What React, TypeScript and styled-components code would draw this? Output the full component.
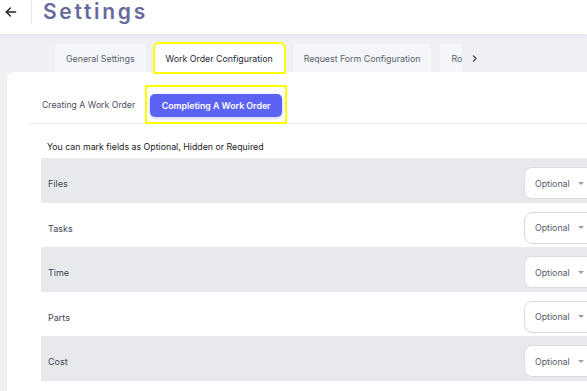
import React from "react";
import styled, { createGlobalStyle } from "styled-components";

const Global = createGlobalStyle`
  html, body { margin: 0; padding: 0; }
  body {
    background: #eef0f4;
    font-family: Inter, "Noto Sans", sans-serif;
    overflow: hidden;
  }
`;

const Page = styled.div`
  width: 587px;
  height: 391px;
  overflow: hidden;
  position: relative;
`;

const Header = styled.header`
  height: 34px;
  background: #ffffff;
  display: flex;
  align-items: flex-start;
  box-shadow: 0 2px 6px rgba(30, 40, 80, 0.06);
  position: relative;
  z-index: 1;
`;

const BackButton = styled.div`
  width: 32px;
  height: 24px;
  display: flex;
  align-items: center;
  justify-content: flex-start;
  padding-left: 3px;
  box-sizing: border-box;
  border-right: 1px solid #e6e7eb;
  color: #222;
`;

const Title = styled.h1`
  margin: 0 0 0 11px;
  font-size: 21px;
  line-height: 24px;
  font-weight: 600;
  color: #666a9c;
  letter-spacing: 2.7px;
`;

const TabsBar = styled.div`
  display: flex;
  align-items: flex-end;
  gap: 8px;
  padding-left: 55px;
  margin-top: 7px;
  height: 31px;
`;

const Tab = styled.div<{ $active?: boolean }>`
  height: 28px;
  box-sizing: border-box;
  padding: 0 11px;
  display: flex;
  align-items: center;
  font-size: 8.8px;
  white-space: nowrap;
  border-radius: 4px 4px 0 0;
  background: ${(p) => (p.$active ? "#ffffff" : "#f5f6f9")};
  color: ${(p) => (p.$active ? "#1f2937" : "#5a5f6e")};
  ${(p) => (p.$active ? "outline: 2px solid #ffff00; margin: 0 1px;" : "")}
`;

const ClippedTabs = styled.div`
  display: flex;
  width: 22px;
  overflow: hidden;
  margin-left: 1px;
`;

const Chevron = styled.div`
  height: 28px;
  display: flex;
  align-items: center;
  color: #333;
`;

const Card = styled.main`
  margin-left: 7px;
  background: #ffffff;
  border-radius: 8px 0 0 0;
  padding-left: 22px;
  height: 330px;
`;

const SubTabs = styled.div`
  display: flex;
  align-items: center;
  box-sizing: border-box;
  height: 52px;
  padding-top: 14px;
  padding-left: 13px;
  border-bottom: 1px solid #eceef2;
`;

const SubTabLabel = styled.div`
  font-size: 8.7px;
  color: #4b5060;
`;

const Highlight = styled.div`
  margin-left: 10px;
  border: 2px solid #ffff00;
  padding: 7px 3px 5px 3px;
  display: flex;
`;

const PrimaryButton = styled.button`
  height: 23px;
  width: 132px;
  border: none;
  border-radius: 5px;
  background: #5b62f4;
  color: #ffffff;
  font-family: Inter, sans-serif;
  font-size: 8.8px;
  font-weight: 600;
  box-shadow: 0 1px 4px rgba(91, 98, 244, 0.35);
  padding: 0;
`;

const Hint = styled.p`
  margin: 0;
  padding: 17px 0 0 18px;
  height: 34px;
  box-sizing: border-box;
  font-size: 8.8px;
  color: #222;
`;

const Rows = styled.div`
  margin-left: 12px;
  margin-right: -12px;
`;

const Row = styled.div<{ $shaded?: boolean }>`
  height: 44.6px;
  background: ${(p) => (p.$shaded ? "#e8e9ed" : "#ffffff")};
  display: flex;
  justify-content: space-between;
  align-items: flex-start;
  padding-left: 7px;
  box-sizing: border-box;
`;

const RowLabel = styled.span`
  font-size: 9px;
  color: #3f4458;
  line-height: 12px;
  margin-top: 20px;
`;

const Select = styled.div`
  margin-top: 9px;
  width: 75px;
  height: 32px;
  box-sizing: border-box;
  background: #ffffff;
  border: 1px solid #d9dbe0;
  border-radius: 8px;
  display: flex;
  align-items: center;
  padding-left: 10px;
  gap: 8px;
  font-size: 8.8px;
  color: #555b6b;
`;

const Caret = styled.span`
  width: 0;
  height: 0;
  border-left: 3px solid transparent;
  border-right: 3px solid transparent;
  border-top: 3px solid #9a9ca3;
`;

const fields = ["Files", "Tasks", "Time", "Parts", "Cost"];

export default function App() {
  return (
    <Page>
      <Global />
      <Header>
        <BackButton>
          <svg width="16" height="16" viewBox="0 0 24 24" fill="none" stroke="#222" strokeWidth="2" strokeLinecap="round" strokeLinejoin="round">
            <path d="M19 12H5" />
            <path d="M11 6l-6 6 6 6" />
          </svg>
        </BackButton>
        <Title>Settings</Title>
      </Header>
      <TabsBar>
        <Tab>General Settings</Tab>
        <Tab $active>Work Order Configuration</Tab>
        <Tab>Request Form Configuration</Tab>
        <ClippedTabs>
          <Tab>Ro</Tab>
        </ClippedTabs>
        <Chevron>
          <svg width="9" height="9" viewBox="0 0 24 24" fill="none" stroke="#333" strokeWidth="3" strokeLinecap="round" strokeLinejoin="round">
            <path d="M9 5l7 7-7 7" />
          </svg>
        </Chevron>
      </TabsBar>
      <Card>
        <SubTabs>
          <SubTabLabel>Creating A Work Order</SubTabLabel>
          <Highlight>
            <PrimaryButton>Completing A Work Order</PrimaryButton>
          </Highlight>
        </SubTabs>
        <Hint>You can mark fields as Optional, Hidden or Required</Hint>
        <Rows>
          {fields.map((f, i) => (
            <Row key={f} $shaded={i % 2 === 0}>
              <RowLabel>{f}</RowLabel>
              <Select>
                Optional
                <Caret />
              </Select>
            </Row>
          ))}
        </Rows>
      </Card>
    </Page>
  );
}
